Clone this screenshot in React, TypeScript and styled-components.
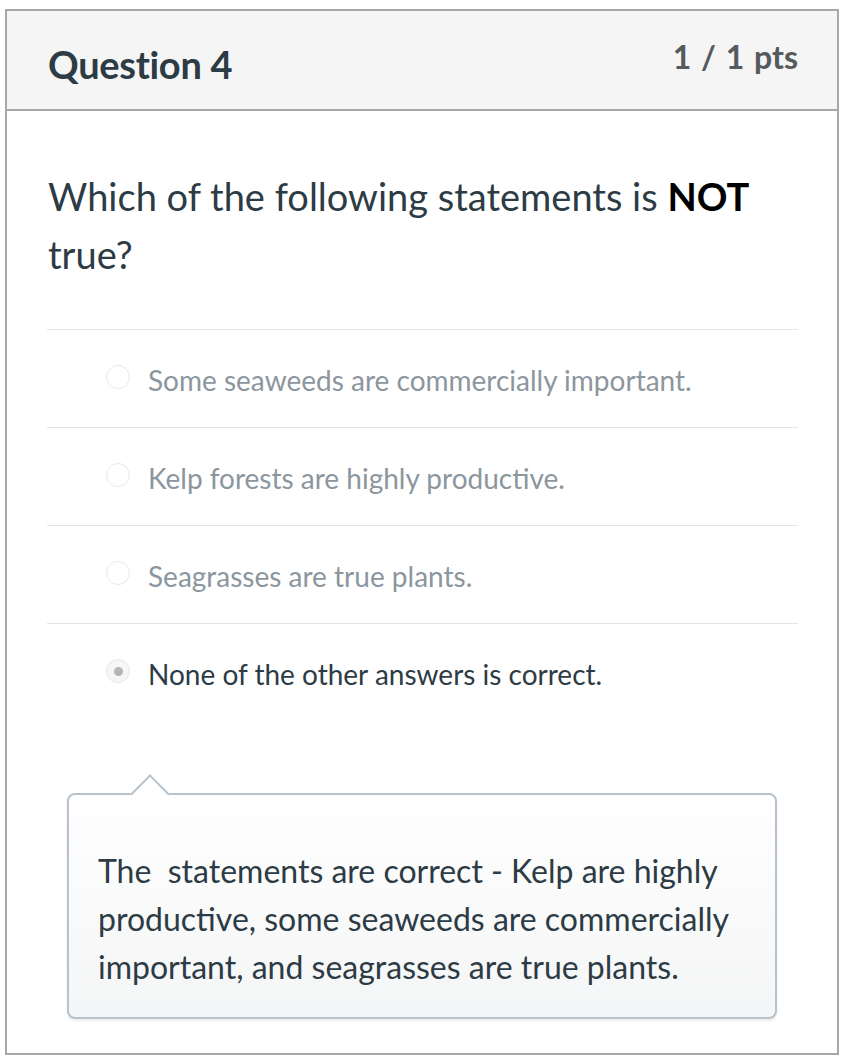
import React from "react";
import styled, { createGlobalStyle } from "styled-components";

const Global = createGlobalStyle`
  html, body { margin: 0; padding: 0; background: #ffffff; }
  body { font-family: Lato, "Open Sans", sans-serif; color: #2d3b45; }
  * { box-sizing: border-box; }
`;

const Page = styled.div`
  padding: 9px 6px 0 5px;
`;

const Card = styled.div`
  width: 834px;
  height: 1046px;
  border: 2px solid #a8a8a8;
  display: flex;
  flex-direction: column;
`;

const Header = styled.div`
  height: 100px;
  background: #f5f5f5;
  border-bottom: 2px solid #a8a8a8;
  display: flex;
  justify-content: space-between;
  align-items: flex-start;
  padding: 0 39px 0 41px;
`;

const Title = styled.h2`
  margin: 0;
  padding-top: 31px;
  font-family: Lato, sans-serif;
  font-size: 38px;
  font-weight: 700;
  line-height: 44px;
  color: #2d3b45;
  letter-spacing: -0.3px;
`;

const Points = styled.div`
  padding-top: 28px;
  font-family: Lato, sans-serif;
  font-size: 32px;
  font-weight: 700;
  line-height: 36px;
  color: #555a5e;
  word-spacing: 2px;
`;

const Body = styled.div`
  padding: 0 39px 0 40px;
  display: flex;
  flex-direction: column;
`;

const QuestionText = styled.p`
  margin: 0;
  padding: 56px 0 46px 1px;
  font-size: 38px;
  line-height: 58px;
  color: #2d3b45;
  border-bottom: 1px solid #e5e5e5;
`;

const Strong = styled.strong`
  font-weight: 700;
  color: #000;
`;

const Answer = styled.div<{ $last?: boolean }>`
  height: 98px;
  display: flex;
  align-items: center;
  padding-left: 59px;
  padding-top: 2px;
  gap: 18px;
  border-bottom: ${(p) => (p.$last ? "none" : "1px solid #e5e5e5")};
`;

const Radio = styled.span<{ $checked?: boolean }>`
  width: 24px;
  height: 24px;
  border-radius: 50%;
  border: 1px solid #e8e8e8;
  background: ${(p) => (p.$checked ? "#f6f6f6" : "#ffffff")};
  display: flex;
  align-items: center;
  justify-content: center;
  flex-shrink: 0;
  margin-top: -6px;
  &::after {
    content: "";
    display: ${(p) => (p.$checked ? "block" : "none")};
    width: 9px;
    height: 9px;
    border-radius: 50%;
    background: #b5b5b5;
  }
`;

const AnswerText = styled.span<{ $dim?: boolean }>`
  font-size: 28px;
  line-height: 34px;
  color: ${(p) => (p.$dim ? "#8b969e" : "#2d3b45")};
`;

const Callout = styled.div`
  position: relative;
  margin: 71px 21px 0 20px;
  border: 2px solid #b7c2cc;
  border-radius: 8px;
  background: linear-gradient(#ffffff, #f4f5f6);
  box-shadow: 0 2px 3px rgba(0, 0, 0, 0.08);
  padding: 52px 12px 26px 29px;
  &::before {
    content: "";
    position: absolute;
    top: -15px;
    left: 67px;
    width: 26px;
    height: 26px;
    background: #ffffff;
    border-top: 2px solid #b7c2cc;
    border-left: 2px solid #b7c2cc;
    transform: rotate(45deg);
  }
`;

const CalloutText = styled.p`
  position: relative;
  margin: 0;
  font-size: 32px;
  line-height: 48px;
  color: #2d3b45;
  white-space: pre-wrap;
`;

const answers = [
  "Some seaweeds are commercially important.",
  "Kelp forests are highly productive.",
  "Seagrasses are true plants.",
];

export default function App() {
  return (
    <>
      <Global />
      <Page>
        <Card>
          <Header>
            <Title>Question 4</Title>
            <Points>1 / 1 pts</Points>
          </Header>
          <Body>
            <QuestionText>
              Which of the following statements is <Strong>NOT</Strong> true?
            </QuestionText>
            {answers.map((a) => (
              <Answer key={a}>
                <Radio />
                <AnswerText $dim>{a}</AnswerText>
              </Answer>
            ))}
            <Answer $last>
              <Radio $checked />
              <AnswerText>None of the other answers is correct.</AnswerText>
            </Answer>
            <Callout>
              <CalloutText>
                {"The  statements are correct - Kelp are highly productive, some seaweeds are commercially important, and seagrasses are true plants."}
              </CalloutText>
            </Callout>
          </Body>
        </Card>
      </Page>
    </>
  );
}
